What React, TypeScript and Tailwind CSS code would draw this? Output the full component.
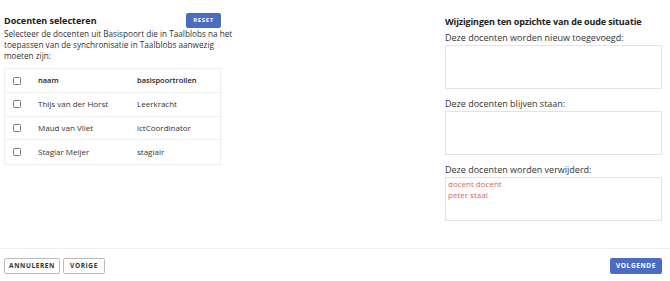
import { useState } from 'react'

const docenten = [
   { naam: 'Thijs van der Horst', rol: 'Leerkracht' },
   { naam: 'Maud van Vliet', rol: 'ictCoordinator' },
   { naam: 'Stagiar Meijer', rol: 'stagiair' },
]

const Checkbox = ({ checked, onChange }: { checked: boolean; onChange: () => void }) => (
   <button
      onClick={onChange}
      className={`w-[8px] h-[8px] border border-[#7a7a7a] rounded-[1.5px] ${checked ? 'bg-[#4b6cc1]' : 'bg-white'}`}
   />
)

const ResultBox = ({ label, items }: { label: string; items: string[] }) => (
   <div className="flex flex-col">
      <div className="text-[9px] leading-[10px] text-[#333] mb-[2px]">{label}</div>
      <div className="h-[44px] border border-[#e3e3e3] px-[2px] text-[8px] leading-[11px] text-[#e0665c]">
         {items.map(item => (
            <div key={item}>{item}</div>
         ))}
      </div>
   </div>
)

const App = () => {
   const [selected, setSelected] = useState<number[]>([])
   const allSelected = selected.length === docenten.length

   const toggle = (index: number) => {
      setSelected(selected.includes(index) ? selected.filter(i => i !== index) : [...selected, index])
   }

   return (
      <div className="w-[670px] h-[281px] bg-white flex flex-col font-['Open_Sans',sans-serif] text-[#222]">
         <div className="flex justify-between pl-[4px] pr-[8px] pt-[13px] h-[248px]">
            <div className="w-[217px] flex flex-col">
               <div className="flex justify-between items-center">
                  <h1 className="text-[9px] font-bold mt-[1px]">Docenten selecteren</h1>
                  <button
                     onClick={() => setSelected([])}
                     className="w-[35px] h-[15px] bg-[#4b6cc1] rounded-[2px] text-white text-[6px] font-bold tracking-[0.6px]"
                  >
                     RESET
                  </button>
               </div>
               <p className="text-[8.2px] leading-[11px] text-[#333] whitespace-nowrap">
                  Selecteer de docenten uit Basispoort die in Taalblobs na het
                  <br />
                  toepassen van de synchronisatie in Taalblobs aanwezig
                  <br />
                  moeten zijn:
               </p>
               <div className="mt-[7px] border border-[#eee] text-[8px] text-[#333]">
                  <div className="h-[24px] flex items-center border-b border-[#eee] text-[7.5px] font-semibold text-[#222]">
                     <div className="w-[33px] pl-[8px] flex items-center">
                        <Checkbox
                           checked={allSelected}
                           onChange={() => setSelected(allSelected ? [] : docenten.map((_, i) => i))}
                        />
                     </div>
                     <div className="w-[99px]">naam</div>
                     <div>basispoortrollen</div>
                  </div>
                  {docenten.map((d, i) => (
                     <div
                        key={d.naam}
                        className={`h-[23.5px] flex items-center ${i < docenten.length - 1 ? 'border-b border-[#eee]' : ''}`}
                     >
                        <div className="w-[33px] pl-[8px] flex items-center">
                           <Checkbox checked={selected.includes(i)} onChange={() => toggle(i)} />
                        </div>
                        <div className="w-[99px]">{d.naam}</div>
                        <div>{d.rol}</div>
                     </div>
                  ))}
               </div>
            </div>
            <div className="w-[217px] flex flex-col">
               <h2 className="text-[9px] font-bold tracking-[-0.15px] mt-[1px] leading-[15px] whitespace-nowrap">
                  Wijzigingen ten opzichte van de oude situatie
               </h2>
               <div className="flex flex-col gap-[10px] mt-[4px]">
                  <ResultBox label="Deze docenten worden nieuw toegevoegd:" items={[]} />
                  <ResultBox label="Deze docenten blijven staan:" items={[]} />
                  <ResultBox label="Deze docenten worden verwijderd:" items={['docent docent', 'peter staal']} />
               </div>
            </div>
         </div>
         <div className="border-t border-[#f0f0f0] flex justify-between items-center pl-[4px] pr-[8px] pt-[9px]">
            <div className="flex gap-[3px]">
               <button className="h-[16px] w-[56px] border border-[#bbb] rounded-[2px] text-[6.5px] font-bold tracking-[0.6px] text-[#333]">
                  ANNULEREN
               </button>
               <button className="h-[16px] w-[42px] border border-[#bbb] rounded-[2px] text-[6.5px] font-bold tracking-[0.6px] text-[#333]">
                  VORIGE
               </button>
            </div>
            <button className="h-[16px] w-[52px] bg-[#4b6cc1] rounded-[2px] text-white text-[6.5px] font-bold tracking-[0.6px]">
               VOLGENDE
            </button>
         </div>
      </div>
   )
}

export default App
